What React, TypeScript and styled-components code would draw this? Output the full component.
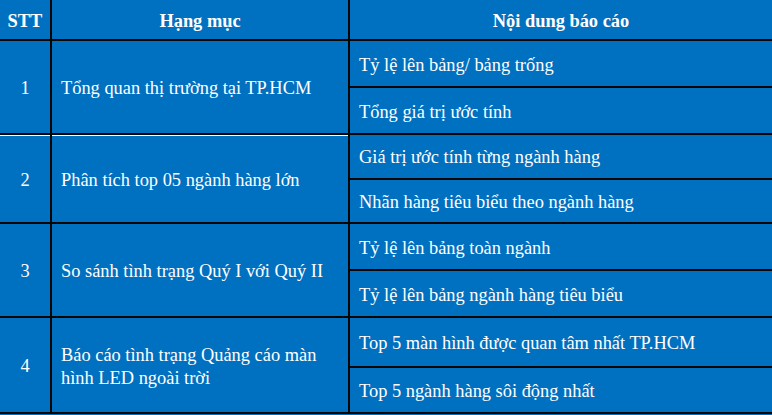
import React from "react";
import styled, { createGlobalStyle } from "styled-components";

const Global = createGlobalStyle`
  html, body { margin: 0; padding: 0; background: #0070c0; }
  body { font-family: "Liberation Serif", "Times New Roman", serif; }
`;

const Table = styled.div`
  width: 772px;
  display: flex;
  flex-direction: column;
  background: #0070c0;
  color: #ffffff;
  font-family: "Liberation Serif", "Times New Roman", serif;
  font-size: 18.4px;
`;

const Row = styled.div<{ $h: number }>`
  display: grid;
  grid-template-columns: 52px 298px 1fr;
  height: ${(p) => p.$h}px;
  box-sizing: border-box;
  border-bottom: 2px solid #050505;
`;

const Cell = styled.div<{ $align?: "center" | "left"; $bold?: boolean; $last?: boolean; $glow?: boolean }>`
  display: flex;
  align-items: center;
  justify-content: ${(p) => (p.$align === "center" ? "center" : "flex-start")};
  padding: ${(p) => (p.$align === "center" ? "3px 0 0" : "3px 8px 0 9px")};
  box-sizing: border-box;
  border-right: ${(p) => (p.$last ? "none" : "2px solid #050505")};
  font-weight: ${(p) => (p.$bold ? 700 : 400)};
  line-height: 23px;
  box-shadow: ${(p) => (p.$glow ? "inset 0 1px 0 #ffffff" : "none")};
`;

const ItemsCell = styled.div`
  display: flex;
  flex-direction: column;
  min-width: 0;
`;

const Sub = styled.div<{ $first?: boolean; $grow: number }>`
  flex: ${(p) => p.$grow} 1 0;
  display: flex;
  align-items: center;
  padding: 3px 8px 0 9px;
  box-sizing: border-box;
  border-bottom: ${(p) => (p.$first ? "2px solid #050505" : "none")};
`;

type Group = {
  no: string;
  title: React.ReactNode;
  items: [string, string];
  h: number;
  split: [number, number];
};

const groups: Group[] = [
  {
    no: "1",
    title: "Tổng quan thị trường tại TP.HCM",
    items: ["Tỷ lệ lên bảng/ bảng trống", "Tổng giá trị ước tính"],
    h: 94,
    split: [1, 1],
  },
  {
    no: "2",
    title: "Phân tích top 05 ngành hàng lớn",
    items: ["Giá trị ước tính từng ngành hàng", "Nhãn hàng tiêu biểu theo ngành hàng"],
    h: 89,
    split: [1, 1],
  },
  {
    no: "3",
    title: "So sánh tình trạng Quý I với Quý II",
    items: ["Tỷ lệ lên bảng toàn ngành", "Tỷ lệ lên bảng ngành hàng tiêu biểu"],
    h: 94,
    split: [1, 1],
  },
  {
    no: "4",
    title: (
      <>
        Báo cáo tình trạng Quảng cáo màn
        <br />
        hình LED ngoài trời
      </>
    ),
    items: ["Top 5 màn hình được quan tâm nhất TP.HCM", "Top 5 ngành hàng sôi động nhất"],
    h: 96,
    split: [49, 45],
  },
];

export default function App() {
  return (
    <>
      <Global />
      <Table>
        <Row $h={41}>
          <Cell $align="center" $bold>STT</Cell>
          <Cell $align="center" $bold>Hạng mục</Cell>
          <Cell $align="center" $bold $last>Nội dung báo cáo</Cell>
        </Row>
        {groups.map((g, i) => (
          <Row key={g.no} $h={g.h}>
            <Cell $align="center" $glow={i === 1}>{g.no}</Cell>
            <Cell $glow={i === 1}>
              <div>{g.title}</div>
            </Cell>
            <ItemsCell>
              <Sub $first $grow={g.split[0]}>{g.items[0]}</Sub>
              <Sub $grow={g.split[1]}>{g.items[1]}</Sub>
            </ItemsCell>
          </Row>
        ))}
      </Table>
    </>
  );
}
